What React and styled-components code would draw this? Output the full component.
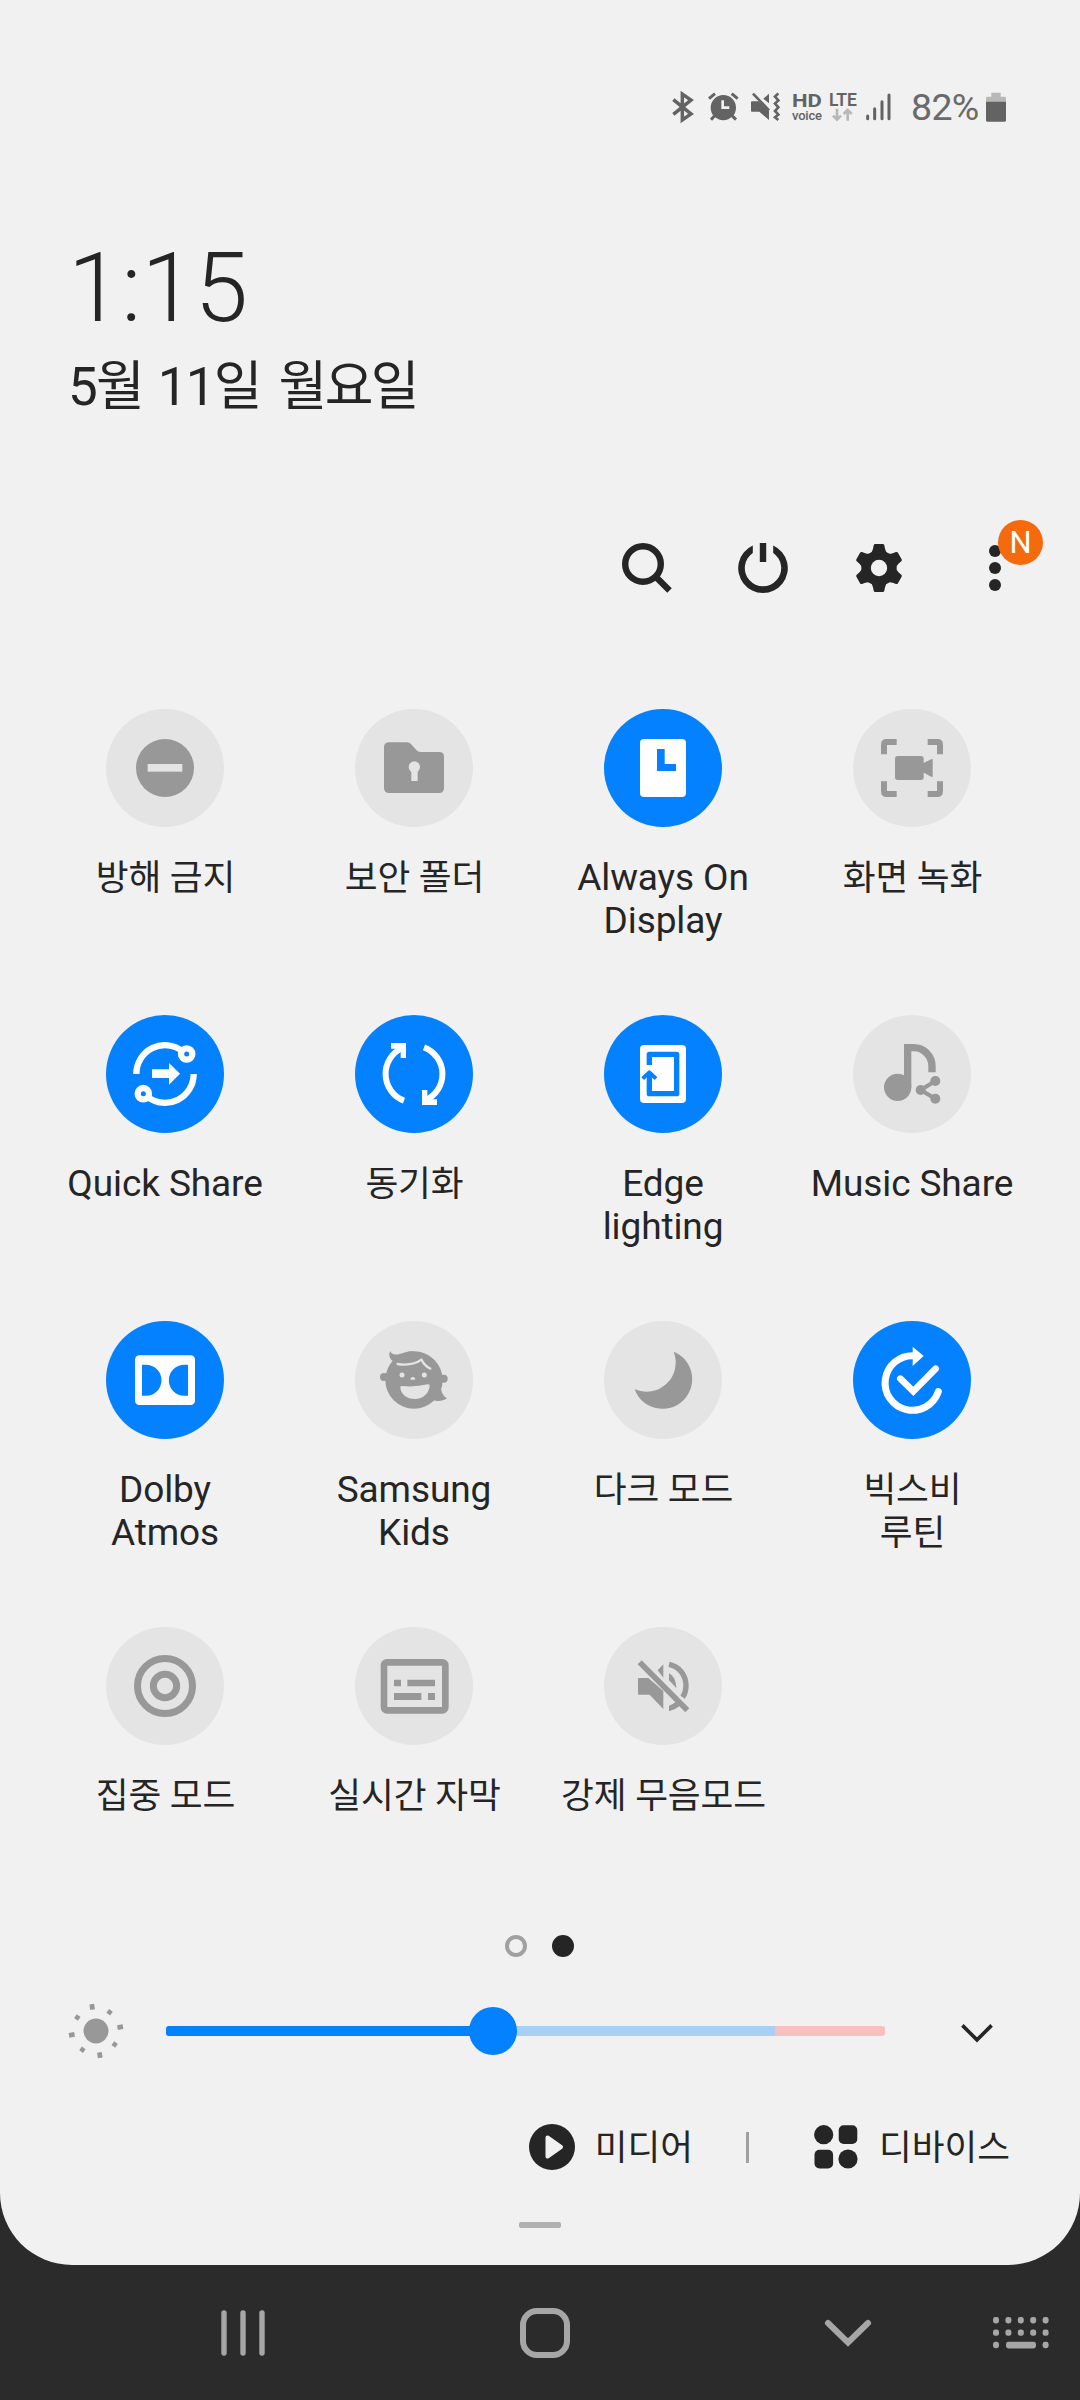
import React, {Component} from "react";
import styled, {createGlobalStyle} from "styled-components";

const INK = '#252525';
const BLUE = '#0381fe';
const PANEL = '#f1f1f1';

const GlobalStyle = createGlobalStyle`
    body {
        margin: 0;
        background-color: #2b2b2b;
        font-family: Roboto, "Noto Sans CJK KR", sans-serif;
        color: ${INK};
    }
    svg {
        display: block;
        flex: none;
        overflow: visible;
    }
`;

const Screen = styled.div`
    display: flex;
    flex-direction: column;
    width: 1080px;
    height: 2400px;
    background-color: #2b2b2b;
`;

const Panel = styled.div`
    display: flex;
    flex-direction: column;
    box-sizing: border-box;
    height: 2265px;
    border-radius: 0 0 72px 72px;
    background-color: ${PANEL};
`;

const StatusBar = styled.div`
    display: flex;
    align-items: center;
    justify-content: flex-end;
    height: 44px;
    padding: 85px 74px 0 0;
    color: #636363;
`;

const StatusItem = styled.div`
    display: flex;
    flex-direction: column;
    width: ${props => props.$width}px;
    margin-right: ${props => props.$gap}px;
`;

const NetLabel = styled.span`
    font-size: ${props => props.$size}px;
    line-height: ${props => props.$line}px;
    font-weight: ${props => props.$weight};
    letter-spacing: ${props => props.$spacing || 0}px;
    white-space: nowrap;
    transform: scaleX(${props => props.$stretch || 1});
    transform-origin: left;
`;

const Percent = styled.span`
    width: 68px;
    margin-right: 7px;
    font-size: 37.5px;
    line-height: 44px;
    letter-spacing: -0.7px;
    white-space: nowrap;
    color: #6a6a6a;
`;

const Clock = styled.div`
    padding: 103px 0 0 68px;
    font-size: 96px;
    line-height: 112px;
    font-weight: 300;
`;

const DateText = styled.div`
    padding: 11px 0 0 68px;
    font-size: 53px;
    line-height: 64px;
    letter-spacing: -1.8px;
    word-spacing: 3.5px;
`;

const Weekday = styled.span`
    margin-left: 3px;
    letter-spacing: -2.7px;
`;

const Toolbar = styled.div`
    display: flex;
    justify-content: flex-end;
    gap: 56px;
    padding: 119px 55px 0 0;
`;

const ToolButton = styled.div`
    position: relative;
    width: 60px;
    height: 60px;
`;

const Badge = styled.div`
    position: absolute;
    left: 33px;
    top: -18px;
    width: 45px;
    height: 45px;
    border-radius: 50%;
    background-color: #f56a0d;
    color: #fff;
    font-size: 31px;
    line-height: 45px;
    text-align: center;
`;

const Tiles = styled.div`
    display: grid;
    grid-template-columns: repeat(4, 249px);
    grid-auto-rows: 306px;
    height: 1224px;
    padding: 111px 0 0 40.5px;
`;

const Tile = styled.div`
    display: flex;
    flex-direction: column;
    align-items: center;
`;

const Round = styled.div`
    width: 118px;
    height: 118px;
    border-radius: 50%;
    background-color: ${props => props.$on ? BLUE : '#e4e4e4'};
    color: ${props => props.$on ? '#fff' : '#989898'};
    --hole: ${props => props.$on ? BLUE : '#e4e4e4'};
`;

const Caption = styled.div`
    margin-top: ${props => props.$korean ? 30 : 29}px;
    padding-left: ${props => props.$korean ? 1 : 0}px;
    font-size: ${props => props.$korean ? 35.7 : 37}px;
    line-height: 43px;
    letter-spacing: -0.1px;
    text-align: center;
    white-space: pre;
`;

const Pager = styled.div`
    display: flex;
    justify-content: center;
    gap: 25px;
    height: 22px;
    padding: 2px 2px 0 0;
`;

const PageDot = styled.div`
    box-sizing: border-box;
    width: 22px;
    height: 22px;
    border-radius: 50%;
    border: 4px solid ${props => props.$active ? INK : '#a0a0a0'};
    background-color: ${props => props.$active ? INK : 'transparent'};
`;

const Brightness = styled.div`
    display: flex;
    align-items: center;
    height: 60px;
    padding: 44px 0 0 66px;
`;

const Track = styled.div`
    position: relative;
    width: 719px;
    height: 10px;
    margin: 0 72px 0 40px;
    border-radius: 3px;
    background: linear-gradient(to right, #aacff5 609px, #f7c0bf 609px);
`;

const Fill = styled.div`
    height: 10px;
    border-radius: 3px 0 0 3px;
    background-color: ${BLUE};
`;

const Thumb = styled.div`
    position: absolute;
    top: -19px;
    width: 48px;
    height: 48px;
    margin-left: -24px;
    border-radius: 50%;
    background-color: ${BLUE};
`;

const Shortcuts = styled.div`
    display: flex;
    align-items: center;
    justify-content: flex-end;
    height: 48px;
    padding: 62px 70px 0 0;
`;

const Shortcut = styled.div`
    display: flex;
    align-items: center;
    gap: ${props => props.$gap}px;
`;

const ShortcutName = styled.span`
    padding-top: 3px;
    font-size: 35.6px;
    line-height: 43px;
`;

const Divider = styled.div`
    width: 3px;
    height: 31px;
    margin: 0 65px 0 53px;
    background-color: #a0a0a0;
`;

const Grabber = styled.div`
    width: 42px;
    height: 6px;
    margin: 51px auto 0;
    border-radius: 2px;
    background-color: #b0b0b0;
`;

const NavBar = styled.div`
    display: grid;
    grid-template-columns: 302px 301px 305px 42px;
    align-items: center;
    justify-items: center;
    height: 135px;
    padding-left: 92px;
    color: #a6a6a6;
`;

// every tile drawing uses a 354 unit box laid over the whole circle
const TileSvg = ({children}) => (
    <svg width="118" height="118" viewBox="0 0 354 354" fill="currentColor">{children}</svg>
);

const icons = {
    block: (
        <TileSvg>
            <circle cx="177" cy="177" r="87"/>
            <rect x="125" y="165" width="104" height="23" fill="var(--hole)"/>
        </TileSvg>
    ),
    folder: (
        <TileSvg>
            <path d="M103 100H157Q163 100 168 105L184 123Q189 129 197 129H253Q267 129 267 143V237Q267 252 252 252H103Q87 252 87 237V115Q87 100 103 100Z"/>
            <circle cx="178" cy="174" r="17" fill="var(--hole)"/>
            <rect x="169" y="180" width="19" height="36" fill="var(--hole)"/>
        </TileSvg>
    ),
    clock: (
        <TileSvg>
            <rect x="108" y="90" width="138" height="174" rx="12"/>
            <path d="M159 120H182V165H216V186H159Z" fill="var(--hole)"/>
        </TileSvg>
    ),
    record: (
        <TileSvg>
            <path d="M93 136V107Q93 99 101 99H131M224 99H253Q261 99 261 107V136M261 217V246Q261 255 253 255H224M131 255H101Q93 255 93 246V217"
                  fill="none" stroke="currentColor" strokeWidth="18"/>
            <rect x="126" y="141" width="86" height="72" rx="8"/>
            <path d="M210 163L236 150Q239 149 239 152V202Q239 205 236 204L210 190Z"/>
        </TileSvg>
    ),
    quickShare: (
        <TileSvg>
            <g fill="none" stroke="currentColor" strokeWidth="19">
                <path d="M91 177A86 86 0 0 1 229 108"/>
                <path d="M263 177A86 86 0 0 1 125 246"/>
                <circle cx="242" cy="117" r="17"/>
                <circle cx="112" cy="236" r="17"/>
            </g>
            <path d="M138 163H189V144L222 176L189 209V189H138Z"/>
        </TileSvg>
    ),
    sync: (
        <TileSvg>
            {[0, 180].map(a => (
                <g key={a} transform={`rotate(${a} 177 177)`}>
                    <path d="M147 257A86 86 0 0 1 143 98" fill="none" stroke="currentColor" strokeWidth="18"/>
                    <path d="M108 84H153V129H137V112L122 101H108Z"/>
                </g>
            ))}
        </TileSvg>
    ),
    edge: (
        <TileSvg>
            <rect x="108" y="90" width="138" height="174" rx="12"/>
            <g fill="none" stroke="var(--hole)" strokeLinejoin="round">
                <path d="M136 150V118H218V236H136V174" strokeWidth="16"/>
                <path d="M116 191L136 172L156 191" strokeWidth="12"/>
            </g>
        </TileSvg>
    ),
    music: (
        <TileSvg>
            <circle cx="134" cy="217" r="41"/>
            <path d="M164 217V98H182A55 55 0 0 1 237 153V172" fill="none" stroke="currentColor" strokeWidth="22"/>
            <circle cx="203" cy="225" r="15"/>
            <circle cx="247" cy="198" r="15"/>
            <circle cx="247" cy="251" r="15"/>
            <path d="M247 198L203 225L247 251" fill="none" stroke="currentColor" strokeWidth="12"/>
        </TileSvg>
    ),
    dolby: (
        <TileSvg>
            <rect x="87" y="103" width="180" height="149" rx="13"/>
            <path d="M108 131H120A46.5 46.5 0 0 1 120 224H108ZM246 131H235A46.5 46.5 0 0 0 235 224H246Z" fill="var(--hole)"/>
        </TileSvg>
    ),
    kids: (
        <TileSvg>
            <circle cx="177" cy="177" r="86"/>
            <path d="M177 90C150 90 132 104 117 100C110 98 107 95 107 90C100 96 102 112 113 120L150 120Z"/>
            <path d="M262 170C252 198 259 222 276 232C262 242 247 242 234 237Z"/>
            <circle cx="87" cy="168" r="12"/>
            <circle cx="266" cy="173" r="12"/>
            <g fill="var(--hole)">
                <circle cx="141" cy="162" r="7.5"/>
                <circle cx="208" cy="162" r="7.5"/>
                <path d="M166 175C168 166 179 166 181 175Q173 178 166 175Z"/>
                <path d="M136 200Q135 194 141 195Q180 199 218 190Q224 189 224 195C222 218 203 234 180 234C156 234 138 220 136 200Z"/>
            </g>
            <path d="M128 129C155 133 182 129 199 116C207 130 213 138 226 143" fill="none" stroke="var(--hole)"
                  strokeWidth="7" strokeLinecap="round"/>
        </TileSvg>
    ),
    moon: (
        <TileSvg>
            <path d="M209 92A89 89 0 1 1 92 205A88 88 0 0 0 209 92Z"/>
        </TileSvg>
    ),
    routine: (
        <TileSvg>
            <path d="M181 104A82 82 0 1 0 256 212" fill="none" stroke="currentColor" strokeWidth="21"
                  strokeLinecap="round"/>
            <path d="M179 77L212 105L179 135Z"/>
            <path d="M142 173L181 211L248 143" fill="none" stroke="currentColor" strokeWidth="20"
                  strokeLinecap="round"/>
        </TileSvg>
    ),
    focus: (
        <TileSvg>
            <g fill="none" stroke="currentColor" strokeWidth="21">
                <circle cx="177" cy="177" r="82.5"/>
                <circle cx="177" cy="177" r="35"/>
            </g>
        </TileSvg>
    ),
    caption: (
        <TileSvg>
            <rect x="87" y="106" width="184" height="144" rx="9" fill="none" stroke="currentColor" strokeWidth="20"/>
            <path d="M117 158H138V178H117ZM157 158H240V178H157ZM117 198H199V219H117ZM219 198H240V219H219Z"/>
        </TileSvg>
    ),
    mute: (
        <TileSvg>
            <path d="M102 156Q102 153 105 153H133L178 192V246L137 203H105Q102 203 102 200Z"/>
            <path d="M161 130L178 112V152Z"/>
            <path d="M195 112C226 118 246 144 246 177Q246 196 236 211" fill="none" stroke="currentColor" strokeWidth="16"/>
            <path d="M195 139C208 146 216 160 217 183L195 160Z"/>
            <path d="M195 236Q207 232 215 225L227 237Q212 249 195 253Z"/>
            <path d="M107 106L250 250" stroke="currentColor" strokeWidth="17"/>
        </TileSvg>
    ),
};

const tiles = [
    {icon: 'block', name: '방해 금지', korean: true},
    {icon: 'folder', name: '보안 폴더', korean: true},
    {icon: 'clock', name: 'Always On\nDisplay', on: true},
    {icon: 'record', name: '화면 녹화', korean: true},
    {icon: 'quickShare', name: 'Quick Share', on: true},
    {icon: 'sync', name: '동기화', on: true, korean: true},
    {icon: 'edge', name: 'Edge\nlighting', on: true},
    {icon: 'music', name: 'Music Share'},
    {icon: 'dolby', name: 'Dolby\nAtmos', on: true},
    {icon: 'kids', name: 'Samsung\nKids'},
    {icon: 'moon', name: '다크 모드', korean: true},
    {icon: 'routine', name: '빅스비\n루틴', on: true, korean: true},
    {icon: 'focus', name: '집중 모드', korean: true},
    {icon: 'caption', name: '실시간 자막', korean: true},
    {icon: 'mute', name: '강제 무음모드', korean: true},
];

class App extends Component {
    constructor(props) {
        super(props);
        this.state = {
            level: 327,
            page: 1
        };
    }

    renderStatus() {
        return (
            <StatusBar>
                <StatusItem $width={21} $gap={15}>
                    <svg width="21" height="30" viewBox="0 0 63 90">
                        <path d="M4 23L57 66L31 84V6L57 24L4 67" fill="none" stroke="currentColor" strokeWidth="10.5"/>
                    </svg>
                </StatusItem>
                <StatusItem $width={31} $gap={12}>
                    <svg width="31" height="30" viewBox="0 0 93 90" fill="currentColor">
                        <circle cx="46" cy="47" r="38"/>
                        <path d="M3 20L21 5M71 5L89 20M20 71L9 83M72 71L84 83" stroke="currentColor" strokeWidth="9"/>
                        <path d="M44 25V47H64" fill="none" stroke={PANEL} strokeWidth="8"/>
                    </svg>
                </StatusItem>
                <StatusItem $width={29} $gap={12}>
                    <svg width="29" height="30" viewBox="0 0 87 90" fill="currentColor">
                        <path d="M0 31Q0 28 3 28H23L54 57V84L25 59H3Q0 59 0 56Z"/>
                        <path d="M37 20L54 5V34Z"/>
                        <path d="M6 5L54 55" stroke="currentColor" strokeWidth="8"/>
                        <path d="M82 4L72 14L82 25L72 35L82 46L72 57L82 68L72 76L82 84" fill="none"
                              stroke="currentColor" strokeWidth="8"/>
                    </svg>
                </StatusItem>
                <StatusItem $width={29} $gap={8}>
                    <NetLabel $size={19} $line={16} $weight={700} $stretch={1.16}>HD</NetLabel>
                    <NetLabel $size={13} $line={13} $weight={500} $spacing={-0.2}>voice</NetLabel>
                </StatusItem>
                <StatusItem $width={28} $gap={9}>
                    <NetLabel $size={17.5} $line={15} $weight={600} $spacing={-0.1}>LTE</NetLabel>
                    <svg width="28" height="14" viewBox="0 0 84 42" fill="none" stroke="#b8b8b8" strokeWidth="8">
                        <path d="M24 2V34M12 23L24 35L36 23M56 38V8M44 18L56 6L68 18"/>
                    </svg>
                </StatusItem>
                <StatusItem $width={25} $gap={20}>
                    <svg width="25" height="28" viewBox="0 0 75 84" stroke="currentColor" strokeWidth="9"
                         strokeLinecap="round">
                        <path d="M5 69V77M26 47V77M48 26V77M69 6V77"/>
                    </svg>
                </StatusItem>
                <Percent>82%</Percent>
                <svg width="20" height="30" viewBox="0 0 60 90" fill="currentColor">
                    <path d="M16 2H44V14H56Q60 14 60 18V30H0V18Q0 14 4 14H16Z" fill="#b8b8b8"/>
                    <path d="M0 29H60V85Q60 89 56 89H4Q0 89 0 85Z"/>
                </svg>
            </StatusBar>
        );
    }

    renderToolbar() {
        return (
            <Toolbar>
                <ToolButton>
                    <svg width="60" height="60" fill="none" stroke={INK} strokeWidth="6.4">
                        <circle cx="26" cy="26" r="17.8"/>
                        <path d="M38 38L52.5 52.5"/>
                    </svg>
                </ToolButton>
                <ToolButton>
                    <svg width="60" height="60" viewBox="-30 -30 60 60" fill={INK}>
                        <path d="M10.2 -22.5A24.8 24.8 0 1 1 -10.2 -22.5V-15A18.2 18.2 0 1 0 10.2 -15Z"/>
                        <rect x="-3.2" y="-25" width="6.4" height="19"/>
                    </svg>
                </ToolButton>
                <ToolButton>
                    <svg width="60" height="60" viewBox="-90 -90 180 180" fill={INK}>
                        <circle r="53"/>
                        {[0, 60, 120, 180, 240, 300].map(a => (
                            <path key={a} transform={`rotate(${a})`}
                                  d="M-28 -40Q-20 -48 -18 -58L-16 -68Q-15 -72 -11 -72H11Q15 -72 16 -68L18 -58Q20 -48 28 -40Z"/>
                        ))}
                        <circle r="24.5" fill={PANEL}/>
                    </svg>
                </ToolButton>
                <ToolButton>
                    <svg width="60" height="60" fill={INK}>
                        <circle cx="30" cy="13" r="6"/>
                        <circle cx="30" cy="30" r="6"/>
                        <circle cx="30" cy="47" r="6"/>
                    </svg>
                    <Badge>N</Badge>
                </ToolButton>
            </Toolbar>
        );
    }

    renderBrightness() {
        return (
            <Brightness>
                <svg width="60" height="60" viewBox="-30 -30 60 60" fill="#989898">
                    <circle r="12.5"/>
                    <g transform="rotate(-9)">
                        {[0, 90, 180, 270].map(a => (
                            <React.Fragment key={a}>
                                <rect x="-2.4" y="-27.3" width="4.8" height="5.6" transform={`rotate(${a})`}/>
                                <rect x="-2.3" y="-25.4" width="4.6" height="4.6" transform={`rotate(${a + 45})`}/>
                            </React.Fragment>
                        ))}
                    </g>
                </svg>
                <Track>
                    <Fill style={{width: this.state.level}}/>
                    <Thumb style={{left: this.state.level}}/>
                </Track>
                <svg width="40" height="40" viewBox="-20 -20 40 40" fill="none" stroke={INK} strokeWidth="3.6">
                    <path d="M-14.6 -5.6L0 8.9L14.6 -5.6"/>
                </svg>
            </Brightness>
        );
    }

    renderNav() {
        return (
            <NavBar>
                <svg width="44" height="46" stroke="currentColor" strokeWidth="5.4" strokeLinecap="round">
                    <path d="M3 3V43M22 3V43M41 3V43"/>
                </svg>
                <svg width="50" height="50" fill="none" stroke="currentColor" strokeWidth="6">
                    <rect x="3" y="3" width="44" height="44" rx="14"/>
                </svg>
                <svg width="46" height="28" fill="none" stroke="currentColor" strokeWidth="6" strokeLinecap="round">
                    <path d="M3 4L23 23.5L43 4"/>
                </svg>
                <svg width="56" height="32" fill="currentColor">
                    {[0, 12.4, 24.8, 37.2, 49.6].map(x => (
                        <React.Fragment key={x}>
                            <rect x={x} y="0" width="6" height="6.4" rx="2.4"/>
                            <rect x={x} y="12.4" width="6" height="6.4" rx="2.4"/>
                        </React.Fragment>
                    ))}
                    <rect x="0" y="24.8" width="6" height="6.4" rx="2.4"/>
                    <rect x="13" y="24.8" width="30" height="6.6" rx="2.4"/>
                    <rect x="49.6" y="24.8" width="6" height="6.4" rx="2.4"/>
                </svg>
            </NavBar>
        );
    }

    render() {
        return (
            <Screen>
                <GlobalStyle/>
                <Panel>
                    {this.renderStatus()}
                    <Clock>1:15</Clock>
                    <DateText>5월 11일 <Weekday>월요일</Weekday></DateText>
                    {this.renderToolbar()}
                    <Tiles>
                        {tiles.map(item => (
                            <Tile key={item.icon}>
                                <Round $on={item.on}>{icons[item.icon]}</Round>
                                <Caption $korean={item.korean}>{item.name}</Caption>
                            </Tile>
                        ))}
                    </Tiles>
                    <Pager>
                        {[0, 1].map(p => <PageDot key={p} $active={p === this.state.page}/>)}
                    </Pager>
                    {this.renderBrightness()}
                    <Shortcuts>
                        <Shortcut $gap={20}>
                            <svg width="46" height="46" fill={INK}>
                                <circle cx="23" cy="23" r="23"/>
                                <path d="M18.5 13.5L32 23L18.5 32.5Z" fill={PANEL} stroke={PANEL} strokeWidth="4"
                                      strokeLinejoin="round"/>
                            </svg>
                            <ShortcutName>미디어</ShortcutName>
                        </Shortcut>
                        <Divider/>
                        <Shortcut $gap={21}>
                            <svg width="44" height="44" fill={INK}>
                                <circle cx="9.7" cy="9.7" r="9.6"/>
                                <rect x="24.7" y="0.3" width="18.6" height="18.6" rx="5"/>
                                <rect x="0.5" y="24.8" width="18.6" height="18.6" rx="5"/>
                                <circle cx="34" cy="34" r="9.6"/>
                            </svg>
                            <ShortcutName>디바이스</ShortcutName>
                        </Shortcut>
                    </Shortcuts>
                    <Grabber/>
                </Panel>
                {this.renderNav()}
            </Screen>
        );
    }
}

export default App;
